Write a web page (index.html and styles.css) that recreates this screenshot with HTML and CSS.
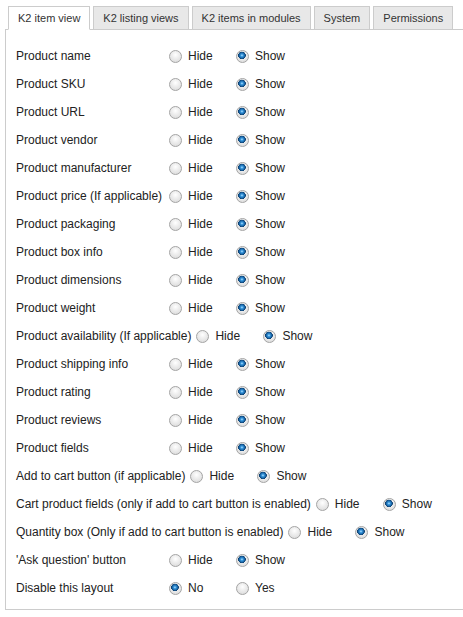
FILE: index.html
```html
<!DOCTYPE html>
<html lang="en">
<head>
    <meta charset="UTF-8">
    <title>K2 item view</title>
    <link rel="stylesheet" href="styles.css">
</head>
<body>
    <div class="settings">
        <ul class="tabs">
            <li class="active">K2 item view</li>
            <li>K2 listing views</li>
            <li>K2 items in modules</li>
            <li>System</li>
            <li>Permissions</li>
        </ul>
        <div class="panel">
            <div class="row"><span class="name">Product name</span><label class="opt"><input type="radio" name="p1"> Hide</label><label class="opt"><input type="radio" name="p1" checked> Show</label></div>
            <div class="row"><span class="name">Product SKU</span><label class="opt"><input type="radio" name="p2"> Hide</label><label class="opt"><input type="radio" name="p2" checked> Show</label></div>
            <div class="row"><span class="name">Product URL</span><label class="opt"><input type="radio" name="p3"> Hide</label><label class="opt"><input type="radio" name="p3" checked> Show</label></div>
            <div class="row"><span class="name">Product vendor</span><label class="opt"><input type="radio" name="p4"> Hide</label><label class="opt"><input type="radio" name="p4" checked> Show</label></div>
            <div class="row"><span class="name">Product manufacturer</span><label class="opt"><input type="radio" name="p5"> Hide</label><label class="opt"><input type="radio" name="p5" checked> Show</label></div>
            <div class="row"><span class="name">Product price (If applicable)</span><label class="opt"><input type="radio" name="p6"> Hide</label><label class="opt"><input type="radio" name="p6" checked> Show</label></div>
            <div class="row"><span class="name">Product packaging</span><label class="opt"><input type="radio" name="p7"> Hide</label><label class="opt"><input type="radio" name="p7" checked> Show</label></div>
            <div class="row"><span class="name">Product box info</span><label class="opt"><input type="radio" name="p8"> Hide</label><label class="opt"><input type="radio" name="p8" checked> Show</label></div>
            <div class="row"><span class="name">Product dimensions</span><label class="opt"><input type="radio" name="p9"> Hide</label><label class="opt"><input type="radio" name="p9" checked> Show</label></div>
            <div class="row"><span class="name">Product weight</span><label class="opt"><input type="radio" name="p10"> Hide</label><label class="opt"><input type="radio" name="p10" checked> Show</label></div>
            <div class="row"><span class="name">Product availability (If applicable)</span><label class="opt"><input type="radio" name="p11"> Hide</label><label class="opt"><input type="radio" name="p11" checked> Show</label></div>
            <div class="row"><span class="name">Product shipping info</span><label class="opt"><input type="radio" name="p12"> Hide</label><label class="opt"><input type="radio" name="p12" checked> Show</label></div>
            <div class="row"><span class="name">Product rating</span><label class="opt"><input type="radio" name="p13"> Hide</label><label class="opt"><input type="radio" name="p13" checked> Show</label></div>
            <div class="row"><span class="name">Product reviews</span><label class="opt"><input type="radio" name="p14"> Hide</label><label class="opt"><input type="radio" name="p14" checked> Show</label></div>
            <div class="row"><span class="name">Product fields</span><label class="opt"><input type="radio" name="p15"> Hide</label><label class="opt"><input type="radio" name="p15" checked> Show</label></div>
            <div class="row"><span class="name">Add to cart button (if applicable)</span><label class="opt"><input type="radio" name="p16"> Hide</label><label class="opt"><input type="radio" name="p16" checked> Show</label></div>
            <div class="row"><span class="name">Cart product fields (only if add to cart button is enabled)</span><label class="opt"><input type="radio" name="p17"> Hide</label><label class="opt"><input type="radio" name="p17" checked> Show</label></div>
            <div class="row"><span class="name">Quantity box (Only if add to cart button is enabled)</span><label class="opt"><input type="radio" name="p18"> Hide</label><label class="opt"><input type="radio" name="p18" checked> Show</label></div>
            <div class="row"><span class="name">'Ask question' button</span><label class="opt"><input type="radio" name="p19"> Hide</label><label class="opt"><input type="radio" name="p19" checked> Show</label></div>
            <div class="row"><span class="name">Disable this layout</span><label class="opt"><input type="radio" name="p20" checked> No</label><label class="opt"><input type="radio" name="p20"> Yes</label></div>
        </div>
    </div>
</body>
</html>
```

FILE: styles.css
```css
* {
    box-sizing: border-box;
}

html,
body {
    overflow: hidden;
}

body {
    margin: 0;
    padding: 0;
    background: #fff;
    color: #222;
    font-family: "Liberation Sans", Arial, sans-serif;
    font-size: 12px;
}

.settings {
    margin: 6px 0 0 5px;
    width: 470px;
}

/* tab strip */
.tabs {
    display: flex;
    gap: 3px;
    list-style: none;
    margin: 0 0 -1px 3px;
    padding: 0;
}

.tabs li {
    position: relative;
    height: 24px;
    line-height: 22px;
    padding: 0 9px;
    font-size: 11px;
    color: #333;
    background: #e8e8e8;
    border: 1px solid #ccc;
    white-space: nowrap;
}

.tabs li.active {
    z-index: 1;
    background: #fff;
    border-bottom-color: #fff;
}

/* settings panel */
.panel {
    border: 1px solid #ccc;
    padding: 12px 10px 7px;
}

.row {
    display: flex;
    align-items: center;
    height: 28px;
    white-space: nowrap;
}

.name {
    min-width: 148px;
}

.opt {
    display: inline-flex;
    align-items: center;
    width: 67px;
}

.opt:last-child {
    width: auto;
}

/* radio buttons drawn to look like the old Windows ones */
.opt input {
    appearance: none;
    -webkit-appearance: none;
    width: 13px;
    height: 13px;
    margin: 0 6px 0 5px;
    border: 1px solid #a4a4a4;
    border-radius: 50%;
    background: radial-gradient(circle at 50% 35%, #fff 0, #f0f0f0 35%, #d6d6d6 100%);
    flex-shrink: 0;
}

.opt input:checked {
    background:
        radial-gradient(circle at 45% 40%, #bfe6ff 0, #3b9be0 1.2px, #1a67a8 2.6px, #0c3e6e 3.6px, rgba(255, 255, 255, 0) 4px),
        radial-gradient(circle at 50% 35%, #fff 0, #f0f0f0 35%, #d6d6d6 100%);
}
```
